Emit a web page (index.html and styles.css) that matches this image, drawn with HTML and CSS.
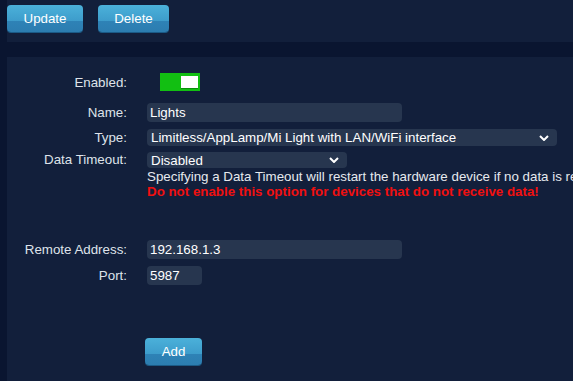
FILE: index.html
```html
<!DOCTYPE html>
<html>
<head>
<meta charset="utf-8">
<link rel="stylesheet" href="styles.css">
</head>
<body>
<div class="page">
  <div class="toolbar">
    <button class="btn">Update</button>
    <button class="btn">Delete</button>
  </div>
  <div class="panel">
    <div class="form">
      <div class="row row-enabled">
        <label class="lbl">Enabled:</label>
        <div class="field"><span class="toggle"><span class="knob"></span></span></div>
      </div>
      <div class="row row-name">
        <label class="lbl">Name:</label>
        <div class="field"><div class="input w-name">Lights</div></div>
      </div>
      <div class="row row-type">
        <label class="lbl">Type:</label>
        <div class="field"><div class="select w-type"><span>Limitless/AppLamp/Mi Light with LAN/WiFi interface</span><svg class="chev" viewBox="0 0 10 6" width="10" height="6"><path d="M1 1 L5 5 L9 1" fill="none" stroke="#fff" stroke-width="2"/></svg></div></div>
      </div>
      <div class="row row-timeout">
        <label class="lbl">Data Timeout:</label>
        <div class="field">
          <div class="select w-timeout"><span>Disabled</span><svg class="chev" viewBox="0 0 10 6" width="10" height="6"><path d="M1 1 L5 5 L9 1" fill="none" stroke="#fff" stroke-width="2"/></svg></div>
          <div class="help">Specifying a Data Timeout will restart the hardware device if no data is received</div>
          <div class="warn">Do not enable this option for devices that do not receive data!</div>
        </div>
      </div>
      <div class="row row-remote">
        <label class="lbl">Remote Address:</label>
        <div class="field"><div class="input w-remote">192.168.1.3</div></div>
      </div>
      <div class="row row-port">
        <label class="lbl">Port:</label>
        <div class="field"><div class="input w-port">5987</div></div>
      </div>
      <div class="row row-add">
        <span class="lbl"></span>
        <div class="field"><button class="btn btn-add">Add</button></div>
      </div>
    </div>
  </div>
</div>
</body>
</html>
```

FILE: styles.css
```css
html, body {
  margin: 0;
  padding: 0;
  height: 100%;
  overflow: hidden;
}
body {
  background: #0a1530;
  font-family: "Liberation Sans", Arial, sans-serif;
  font-size: 13.33px;
  color: #e6e9ee;
}
.page {
  margin-left: 7px;
  display: flex;
  flex-direction: column;
  height: 100%;
  overflow: hidden;
}
.toolbar {
  background: #121f3b;
  height: 42px;
  box-sizing: border-box;
  padding-top: 5px;
  display: flex;
  gap: 15px;
  align-items: flex-start;
}
.btn {
  font-family: "Liberation Sans", Arial, sans-serif;
  font-size: 13.33px;
  color: #fff;
  border: none;
  border-radius: 4px;
  height: 27px;
  padding: 0;
  background: linear-gradient(to bottom, #4bb1da 0%, #3d9ccb 60%, #2e82b6 61%, #2c7db0 100%);
  box-shadow: 0 1px 0 #1b5a86;
  cursor: pointer;
}
.toolbar .btn:first-child { width: 76px; }
.toolbar .btn:last-child { width: 71px; }
.panel {
  margin-top: 15px;
  background: #121f3b;
  flex: 1;
  padding-top: 16px;
  overflow: hidden;
}
.form {
  display: flex;
  flex-direction: column;
}
.row {
  display: grid;
  grid-template-columns: 120px 1fr;
  column-gap: 20px;
  align-items: center;
}
.lbl {
  text-align: right;
  color: #dfe3ea;
}
.field {
  min-width: 0;
}
.toggle {
  display: block;
  width: 40px;
  height: 18px;
  margin-left: 13px;
  background: #12bf12;
  position: relative;
}
.knob {
  position: absolute;
  right: 2px;
  top: 3px;
  width: 17px;
  height: 12px;
  background: #fff;
  box-shadow: 0 1px 0 #0b900b;
}
.input, .select {
  background: #27364f;
  border-radius: 4px;
  color: #fff;
  box-sizing: border-box;
  padding: 0 3px;
  display: flex;
  align-items: center;
  white-space: nowrap;
}
.input { height: 19px; }
.select { height: 17px; justify-content: space-between; padding-right: 8px; padding-left: 4px; }
.chev { flex: none; }
.w-name { width: 255px; }
.w-type { width: 410px; }
.w-timeout { width: 200px; height: 16px; }
.w-remote { width: 255px; }
.w-port { width: 55px; }
.row-name { margin-top: 12px; }
.row-type { margin-top: 7px; }
.row-timeout { margin-top: 6px; align-items: start; }
.row-timeout .lbl { line-height: 16px; }
.help { white-space: nowrap; line-height: 15px; margin-top: 1px; }
.warn { white-space: nowrap; color: #f01010; font-weight: bold; line-height: 15px; }
.row-remote { margin-top: 41px; }
.row-port { margin-top: 7px; }
.row-add { margin-top: 53px; }
.btn-add { width: 57px; margin-left: -2px; }
```
